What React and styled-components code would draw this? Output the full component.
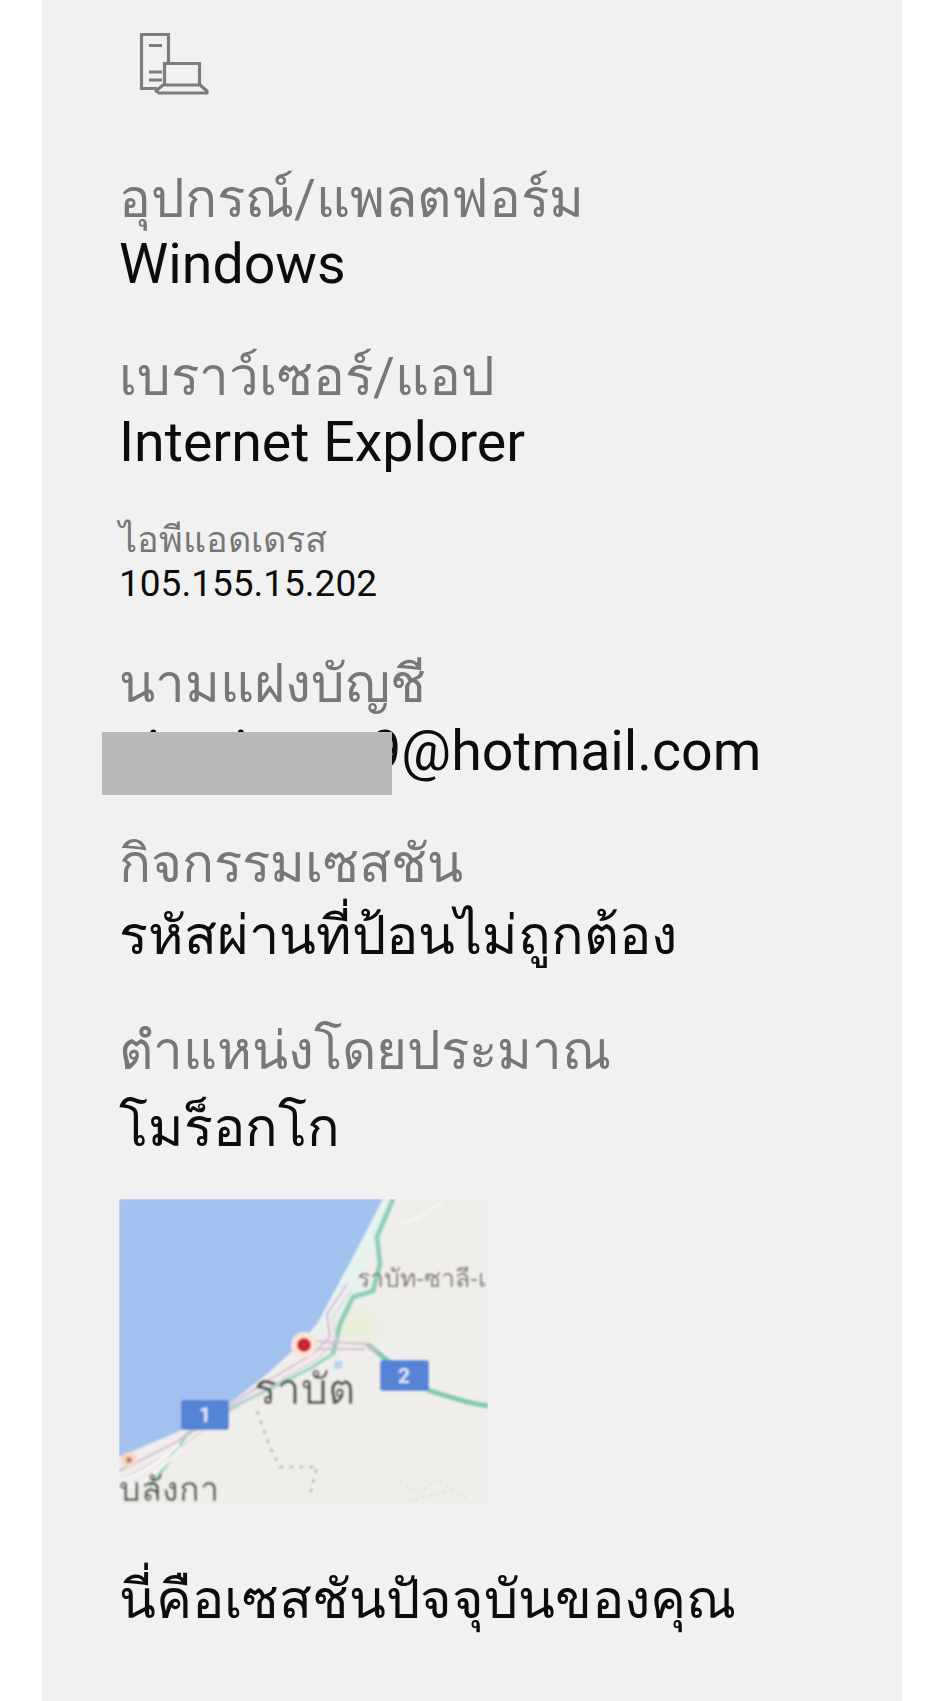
import styled, { createGlobalStyle } from 'styled-components';

const GlobalStyle = createGlobalStyle`
  html, body {
    margin: 0;
    background: #fff;
  }
`;

const Panel = styled.main`
  box-sizing: border-box;
  width: 860px;
  height: 1701px;
  margin-left: 42px;
  padding: 28px 77px 0;
  background: #f1f1f2;
  border-top: 3px solid #eef2f6;
  font-family: Roboto, 'Noto Sans', sans-serif;
  overflow: hidden;
`;

const DeviceIcon = styled.svg`
  display: block;
  width: 72px;
  height: 64px;
  margin-left: 19px;
  margin-bottom: 71px;
`;

const Field = styled.section`
  margin-bottom: ${(p) => p.$gap}px;
`;

const Label = styled.div`
  color: #777;
  font-size: ${(p) => (p.$small ? 36 : 53)}px;
  line-height: ${(p) => (p.$small ? 46 : 66)}px;
  white-space: nowrap;
`;

const Value = styled.div`
  margin-top: ${(p) => p.$lift || 0}px;
  color: #0c0c0c;
  font-size: ${(p) => (p.$small ? 37 : p.$thai ? 54 : 55.5)}px;
  line-height: ${(p) => (p.$small ? 42 : 66)}px;
  white-space: nowrap;
`;

const EmailRow = styled.div`
  position: relative;
  margin-top: 2px;
`;

const Redaction = styled.div`
  position: absolute;
  left: -17px;
  top: 13px;
  width: 290px;
  height: 63px;
  background: #b9b9b9;
`;

const MapFrame = styled.svg`
  display: block;
  width: 369px;
  height: 307px;
  margin-top: 38px;
`;

const Caption = styled.p`
  margin: 61px 0 0;
  color: #0c0c0c;
  font-size: 54px;
  line-height: 66px;
  white-space: nowrap;
`;

function Device() {
  return (
    <DeviceIcon viewBox="0 0 72 64" fill="none" stroke="#7d7d7d" strokeWidth="3.2">
      <path d="M19 57.500H3.500V3.500H30.500V32" />
      <path d="M11 14.500H24M11 41H24M11 49H24" />
      <path d="M26.500 53V32.500H61.500V53" />
      <path d="M25 54H62L69 60V62H21L18 60Z" strokeLinejoin="round" />
    </DeviceIcon>
  );
}

function RegionMap() {
  return (
    <MapFrame viewBox="0 0 369 307">
      <defs>
        <filter id="soft" x="-5%" y="-5%" width="110%" height="110%">
          <feGaussianBlur stdDeviation="1" />
        </filter>
        <filter id="softer" x="-20%" y="-20%" width="140%" height="140%">
          <feGaussianBlur stdDeviation="8" />
        </filter>
      </defs>
      <g filter="url(#soft)">
        <rect width="369" height="307" fill="#efeeea" />
        <ellipse cx="238" cy="128" rx="18" ry="16" fill="#e6efd2" filter="url(#softer)" />
        <path d="M180 150L235 100L276 0H262L214 95Z" fill="#e6f3ef" />
        <path d="M0 0H264L234 58L214 95L198 125L178 148L148 175L114 202L61 232L0 258Z" fill="#a2c1ee" />
        <path d="M274 0L258 38L261 65L254 92L234 98L221 125L214 155" fill="none" stroke="#8bd0b9" strokeWidth="5" />
        <path d="M214 155L190 170L114 208L68 235L48 265L31 288" fill="none" stroke="#9ad8c3" strokeWidth="3.500" />
        <path d="M248 145L264 158L311 192L348 203L369 207" fill="none" stroke="#7fcbb0" strokeWidth="5" />
        <path d="M228 85L208 115L211 138L194 155L148 182L108 208L54 245L0 272" fill="none" stroke="#d9b9d8" strokeWidth="2" />
        <path d="M233 90L214 118L217 140L198 160L150 188L112 212L58 250L4 280" fill="none" stroke="#e3cbe3" strokeWidth="1.500" />
        <path d="M194 142L248 145L258 155M194 150L246 150" fill="none" stroke="#d9b9d8" strokeWidth="2" />
        <path d="M281 25L300 18L324 2" fill="none" stroke="#f7f7f5" strokeWidth="2" />
        <path d="M0 282C25 275 50 255 60 245M0 292C30 285 45 265 62 250" fill="none" stroke="#f8f8f8" strokeWidth="2.500" />
        <path d="M215 162h8v8h-8z" fill="#bcd3ee" />
        <path d="M138 212L151 248L161 268L198 268L191 295" fill="none" stroke="#b5b5b2" strokeWidth="2.500" strokeDasharray="4 6" />
        <path d="M281 282L300 294L318 280L348 300M290 302L330 292" fill="none" stroke="#dededa" strokeWidth="2" strokeDasharray="3 4" />
        <circle cx="185" cy="146" r="13" fill="#fbe3d6" />
        <circle cx="185" cy="146" r="7" fill="#c9282f" />
        <circle cx="10" cy="261" r="8" fill="#f7d7c2" />
        <circle cx="10" cy="261" r="3" fill="#b28768" />
        <rect x="62" y="201" width="48" height="30" rx="3" fill="#5484d6" />
        <rect x="261" y="161" width="49" height="31" rx="3" fill="#5484d6" />
        <text x="86" y="223" fontFamily="Roboto, sans-serif" fontSize="21" fontWeight="700" fill="#dfe8f7" textAnchor="middle">1</text>
        <text x="285" y="184" fontFamily="Roboto, sans-serif" fontSize="21" fontWeight="700" fill="#dfe8f7" textAnchor="middle">2</text>
        <text x="238" y="88" fontFamily="Noto Sans, sans-serif" fontSize="25" fill="#77706f">ราบัท-ซาลี-เ</text>
        <text x="185" y="205" fontFamily="Noto Sans, sans-serif" fontSize="42" fill="#4f4c4e" textAnchor="middle">ราบัต</text>
        <text x="0" y="302" fontFamily="Noto Sans, sans-serif" fontSize="34" fill="#4f4c4e">บลังกา</text>
      </g>
    </MapFrame>
  );
}

export default function App() {
  return (
    <>
      <GlobalStyle />
      <Panel>
        <Device />
        <Field $gap={46}>
          <Label>อุปกรณ์/แพลตฟอร์ม</Label>
          <Value>Windows</Value>
        </Field>
        <Field $gap={41}>
          <Label>เบราว์เซอร์/แอป</Label>
          <Value>Internet Explorer</Value>
        </Field>
        <Field $gap={46}>
          <Label $small>ไอพีแอดเดรส</Label>
          <Value $small>105.155.15.202</Value>
        </Field>
        <Field $gap={46}>
          <Label>นามแฝงบัญชี</Label>
          <EmailRow>
            {/* the part before the 9 is masked: filler letters only */}
            <Value>xixxrixccrr9@hotmail.com</Value>
            <Redaction />
          </EmailRow>
        </Field>
        <Field $gap={49}>
          <Label>กิจกรรมเซสชัน</Label>
          <Value $thai $lift={6}>รหัสผ่านที่ป้อนไม่ถูกต้อง</Value>
        </Field>
        <Field $gap={0}>
          <Label>ตำแหน่งโดยประมาณ</Label>
          <Value $thai $lift={11}>โมร็อกโก</Value>
        </Field>
        <RegionMap />
        <Caption>นี่คือเซสชันปัจจุบันของคุณ</Caption>
      </Panel>
    </>
  );
}
